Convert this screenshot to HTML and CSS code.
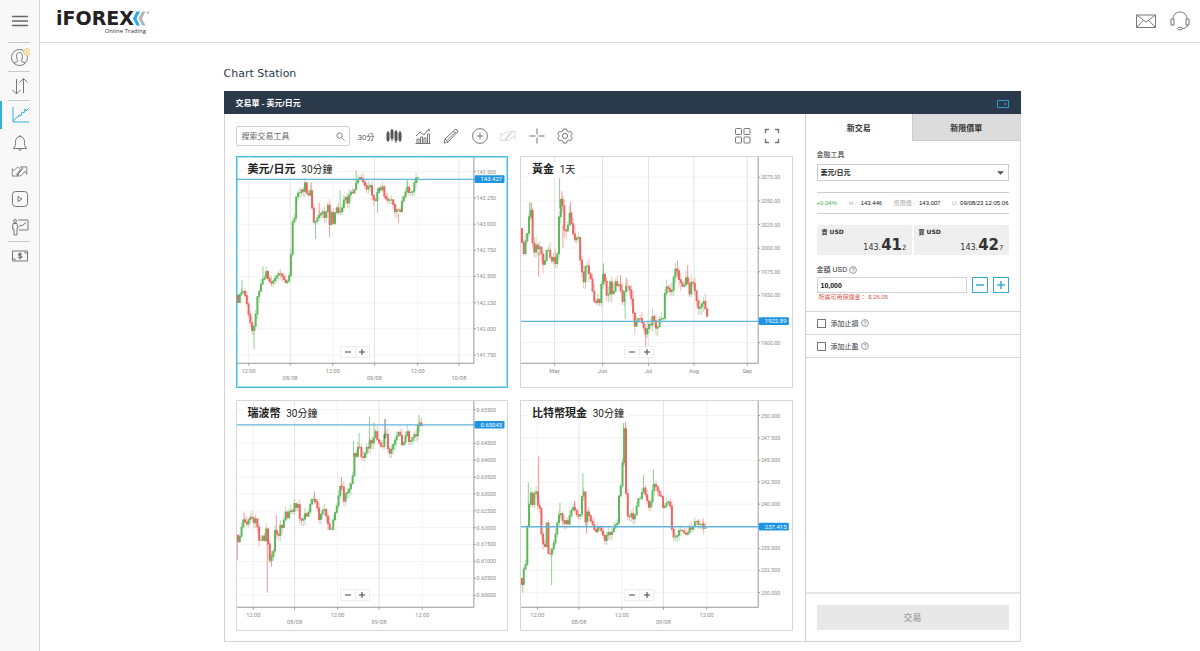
FILE: index.html
```html
<!DOCTYPE html>
<html lang="zh-Hant">
<head>
<meta charset="utf-8">
<title>iFOREX Chart Station</title>
<link rel="stylesheet" href="styles.css">
</head>
<body>
<svg class="sprite" aria-hidden="true">
  <symbol id="swap" viewBox="0 0 18 12"><path d="M1 3v8h7l-2-2 4-5-3-3-4 4zM17 9V1h-7l2 2-5 6 2 2 2-1 4-4zM6 11l7-9"/></symbol>
  <symbol id="help" viewBox="0 0 8 8"><circle cx="4" cy="4" r="3.4"/><path d="M2.9 3.2c0-1.6 2.3-1.5 2.2 0C5 3.9 4 3.9 4 4.9M4 5.6v.7"/></symbol>
</svg>
<nav class="sidebar" aria-label="主選單">
  <button class="menu" aria-label="選單"><svg viewBox="0 0 16 12"><path d="M0 1.5h16M0 6h16M0 10.5h16"/></svg></button>
  <ul class="nav">
    <li class="rule"></li>
    <li><a href="#" aria-label="帳戶"><svg viewBox="0 0 20 20"><circle cx="9.5" cy="10.5" r="8"/><path d="M4 16.2c1-1 3.5-1.2 3.8-2.2.2-1-1.3-2-1.3-4.5C6.5 7 7.5 5.5 9.5 5.5s3 1.5 3 4c0 2.5-1.5 3.5-1.3 4.5.3 1 2.8 1.2 3.8 2.2"/><circle class="coin" cx="17" cy="5" r="3.3"/><path class="coin-mark" d="M17 3.5v3"/></svg></a></li>
    <li class="rule"></li>
    <li><a href="#" aria-label="交易"><svg viewBox="0 0 20 20"><path d="M6.5 3v15M2.500 14l4 4 4-4M13.500 17V2.500M9.500 6.500l4-4 4 4"/></svg></a></li>
    <li class="rule"></li>
    <li class="active"><a href="#" aria-label="圖表"><svg viewBox="0 0 20 20"><path d="M3 2v15h16"/><path d="M3 16l3-3 2-1 1-2 2 1 1-4 2 1 1-4 1 2 3-3"/></svg></a></li>
    <li><a href="#" aria-label="提醒"><svg viewBox="0 0 20 20"><path d="M3.5 15.5c2-2 2-4 2-7 0-3 2-5 4.5-5s4.500 2 4.500 5c0 3 0 5 2 7zM8.5 15.5c0 2.500 3 2.500 3 0M10 3.500V2"/></svg></a></li>
    <li><a href="#" aria-label="訊號"><svg class="wide" viewBox="0 0 18 12"><use href="#swap"/></svg></a></li>
    <li><a href="#" aria-label="影片"><svg viewBox="0 0 20 20"><rect x="2.5" y="2.5" width="15" height="15" rx="3"/><path d="M8 7.5v5l4-2.5z"/></svg></a></li>
    <li><a href="#" aria-label="教學"><svg viewBox="0 0 20 20"><circle cx="5" cy="4" r="1.5"/><path d="M3 6.5h4l1 5H7V18H4v-6H2.5zM8 3h10v10H9M9 9.5l2-1.5 1 .8 4-3.3"/></svg></a></li>
    <li class="rule"></li>
    <li><a href="#" aria-label="資金"><svg viewBox="0 0 20 20"><path d="M2.5 5h15v10h-15zM4 12v1.500h1.500M14.500 6.500H16V8"/><path class="strong" d="M11.800 8.300c-1-1.200-3.700-.9-3.300.4.400 1.100 3 .7 3.200 2 .2 1.400-2.700 1.500-3.500.3M10 6.500v7"/></svg></a></li>
  </ul>
</nav>
<div class="page">
  <header class="topbar">
    <a class="logo" href="#" aria-label="iFOREX Online Trading">
      <span class="logo-row"><span class="logo-name">iFOREX</span><svg class="chevrons" viewBox="0 0 17 15"><path class="chev-blue" d="M3.500.500h3.500L3.500 7.500 7 14.500H3.500L0 7.500z"/><path class="chev-grey" d="M9 .500h3.500L9 7.500l3.500 7H9L5.500 7.500z"/><circle class="chev-dot" cx="15" cy="1.500" r="1"/></svg></span>
      <span class="logo-tag">Online Trading</span>
    </a>
    <div class="top-actions">
      <button aria-label="訊息"><svg viewBox="0 0 22 20"><path d="M1.500 4h19v12.500h-19zM1.500 4l9.500 7 9.500-7M1.500 16.500l7-7.300M20.500 16.500l-7-7.300"/></svg></button>
      <button aria-label="客服"><svg viewBox="0 0 22 20"><path d="M4 8c0-4 3-7 7-7s7 3 7 7M2 8h3v6H2zM17 8h3v6h-3zM18.500 14c0 2.500-3 3.500-5.500 3.500"/><ellipse cx="11" cy="17.500" rx="2.500" ry="1.300"/></svg></button>
    </div>
  </header>
  <main class="content">
    <h1>Chart Station</h1>
    <section class="station">
      <div class="station-bar"><h2>交易單 - 美元/日元</h2><button aria-label="收合面板"><svg viewBox="0 0 12 8"><path d="M.5.5h11v7H.5z"/><path class="fill" d="M7.500 2.500v3l2-1.500z"/></svg></button></div>
      <div class="station-body">
        <div class="workspace">
          <div class="toolbar">
            <label class="search"><input type="text" aria-label="搜索交易工具" placeholder="搜索交易工具"><svg viewBox="0 0 10 10"><circle cx="4" cy="4" r="3"/><path d="M6.200 6.200L9.500 9.500"/></svg></label>
            <button class="period">30分</button>
            <div class="tools">
              <button aria-label="圖表類型"><svg class="dark" viewBox="0 0 16 16"><path d="M2 3v11M6 1v12M10 2v13M14 3v11"/><path class="body" d="M2 5.500v6M6 3v6.500M10 4.500v7M14 5.500v6"/></svg></button>
              <button aria-label="指標"><svg viewBox="0 0 16 16"><path d="M.5 15.500h15M2 15v-4h2v4M5.500 15V9h2v6M9 15v-5h2v5M12.500 15V6h2v9M1 8l4-4 4 3 4-5 2 1M13 2l2-1"/></svg></button>
              <button aria-label="繪圖"><svg viewBox="0 0 16 16"><path d="M1 15l1-4L12 1.500c1-1 3.500 1.500 2.500 2.500L5 14zM2 11l3 3M10.500 3l2.500 2.500M4 12.500l8.500-8.500"/></svg></button>
              <button aria-label="新增"><svg viewBox="0 0 16 16"><circle cx="8" cy="8" r="7.400"/><path d="M8 4.500v7M4.500 8h7"/></svg></button>
              <button aria-label="訊號" disabled><svg viewBox="0 0 18 12"><use href="#swap"/></svg></button>
              <button aria-label="十字線"><svg viewBox="0 0 16 16"><path d="M8 .5v6M8 9.500v6M.5 8h6M9.500 8h6"/></svg></button>
              <button aria-label="設定"><svg viewBox="0 0 16 16"><circle cx="8" cy="8" r="2.600"/><path d="M6.400 1h3.200l.6 2.200 1.300.7 2.200-.6 1.600 2.800-1.600 1.600v.6l1.600 1.600-1.600 2.800-2.200-.6-1.300.7-.6 2.200H6.400l-.6-2.200-1.300-.7-2.200.6L.7 9.900l1.600-1.600v-.6L.7 6.100l1.600-2.800 2.200.6 1.300-.7z"/></svg></button>
            </div>
            <div class="views">
              <button aria-label="版面"><svg viewBox="0 0 16 16"><rect x=".5" y=".5" width="6" height="6" rx=".8"/><rect x="9" y=".5" width="6" height="6" rx=".8"/><rect x=".5" y="9" width="6" height="6" rx=".8"/><rect x="9" y="9" width="6" height="6" rx=".8"/></svg></button>
              <button aria-label="全螢幕"><svg class="thick" viewBox="0 0 16 16"><path d="M1.500 5V1.500H5M11 1.500h3.500V5M14.500 11v3.500H11M5 14.500H1.500V11"/></svg></button>
            </div>
          </div>
          <div class="charts">
            <article class="card selected" data-chart="usdjpy"><h3>美元/日元 <span>30分鐘</span></h3></article>
            <article class="card" data-chart="gold"><h3>黃金 <span>1天</span></h3></article>
            <article class="card" data-chart="xrp"><h3>瑞波幣 <span>30分鐘</span></h3></article>
            <article class="card" data-chart="bch"><h3>比特幣現金 <span>30分鐘</span></h3></article>
          </div>
        </div>
        <form class="ticket">
          <div class="tabs"><button type="button" class="on">新交易</button><button type="button">新限價單</button></div>
          <div class="fields">
            <label class="caption" for="instrument">金融工具</label>
            <div class="select"><select id="instrument"><option>美元/日元</option></select><svg viewBox="0 0 8 4"><path d="M0 0h8L4 4z"/></svg></div>
            <div class="stats">
              <span class="up">+0.04%</span>
              <span class="pair"><i>H :</i><b>143.44<small>6</small></b></span>
              <span class="pair"><i>低限價 :</i><b>143.00<small>7</small></b></span>
              <span class="pair"><i>U:</i><b>09/08/23 12:05:06</b></span>
            </div>
            <div class="quotes">
              <button type="button"><span class="side">賣 USD</span><span class="quote">143.<b>41</b><small>2</small></span></button>
              <button type="button"><span class="side">買 USD</span><span class="quote">143.<b>42</b><small>7</small></span></button>
            </div>
            <label class="caption" for="amount">金額 USD <svg class="help"><use href="#help"/></svg></label>
            <div class="amount">
              <input id="amount" type="text" value="10,000">
              <button type="button" aria-label="減少"><svg viewBox="0 0 10 10"><path d="M1 5h8"/></svg></button>
              <button type="button" aria-label="增加"><svg viewBox="0 0 10 10"><path d="M1 5h8M5 1v8"/></svg></button>
            </div>
            <p class="margin">所需可用保證金： $ 26.05</p>
          </div>
          <div class="option"><input type="checkbox" id="sl"><label for="sl">添加止損 <svg class="help"><use href="#help"/></svg></label></div>
          <div class="option"><input type="checkbox" id="tp"><label for="tp">添加止盈 <svg class="help"><use href="#help"/></svg></label></div>
          <div class="submit"><button type="submit" disabled>交易</button></div>
        </form>
      </div>
    </section>
  </main>
</div>
<script src="charts.js"></script>
</body>
</html>
```
FILE: styles.css
```css
* { box-sizing: border-box; }
body { margin: 0; min-height: 100vh; display: flex; background: #fff; color: #333; font-family: "Liberation Sans", "Noto Sans CJK TC", sans-serif; font-size: 8px; }
button { font: inherit; color: inherit; background: none; border: 0; padding: 0; margin: 0; }
h1, h2, h3, p, ul { margin: 0; padding: 0; }
svg { display: block; fill: none; stroke: #777; stroke-width: 1; }
.sprite { position: absolute; width: 0; height: 0; }

.sidebar { flex: none; width: 40px; background: #f8f8f8; border-right: 1px solid #d6d6d6; }
.menu { display: flex; width: 100%; height: 42px; align-items: center; justify-content: center; }
.menu svg { width: 16px; height: 12px; stroke: #666; stroke-width: 1.5; }
.nav { list-style: none; }
.nav li { height: 28px; }
.nav .rule { height: 1px; margin: 0 9px 0 8px; background: #c9c9c9; }
.nav a { display: flex; height: 100%; align-items: center; justify-content: center; }
.nav svg { width: 20px; height: 20px; }
.nav svg.wide { width: 17px; height: 11px; }
.nav .strong { stroke-width: 1.3; }
.nav .active { border-left: 2px solid #35b0da; padding-right: 2px; }
.nav .active svg { stroke: #35b0da; }
.coin { fill: #fbf3cf; stroke: #e6cf72; }
.coin-mark { stroke: #e0c050; }

.page { flex: 1; min-width: 0; }
.topbar { height: 43px; display: flex; justify-content: space-between; align-items: center; padding: 0 9px 0 16px; border-bottom: 1px solid #d6d6d6; }
.logo { display: flex; flex-direction: column; color: #222; text-decoration: none; padding-top: 3px; }
.logo-row { display: flex; align-items: center; height: 16px; }
.logo-name { font: bold 19px/16px "DejaVu Sans", sans-serif; }
.chevrons { width: 17px; height: 15px; stroke: none; margin-left: -1px; }
.chev-blue { fill: #2aaee0; }
.chev-grey { fill: #b5b5b5; }
.chev-dot { fill: #999; }
.logo-tag { align-self: flex-end; margin: 1px 4px 0 0; font: 6px/8px "Open Sans", sans-serif; color: #333; }
.top-actions { display: flex; gap: 12px; }
.top-actions svg { width: 22px; height: 20px; }

.content { width: 100%; max-width: 801px; margin: 0 auto; padding: 23px 0 8px 4px; }
h1 { font: 11px/16px "DejaVu Sans", sans-serif; color: #2b3a4a; margin-bottom: 9px; }
.station { border: 1px solid #d3d3d3; border-top: 0; }
.station-bar { display: flex; justify-content: space-between; align-items: center; height: 23px; margin: 0 -1px; padding: 2px 12px 0; background: #2b3a4a; color: #fff; }
.station-bar h2 { font-size: 8px; line-height: 12px; }
.station-bar svg { width: 12px; height: 8px; stroke: #2b9fcb; }
.station-bar .fill { fill: #2b9fcb; stroke: none; }
.station-body { display: flex; }
.workspace { flex: 1; min-width: 0; padding: 12px 12px 10px 11px; }

.toolbar { display: flex; align-items: center; height: 20px; margin-bottom: 10px; }
.toolbar svg { width: 16px; height: 16px; }
.toolbar .search { display: flex; align-items: center; width: 114px; height: 20px; padding: 0 4px 0 5px; border: 1px solid #d0d0d0; border-radius: 2px; }
.search input { flex: 1; min-width: 0; border: 0; padding: 0; font: inherit; outline: 0; background: none; }
.search input::placeholder { color: #666; opacity: 1; }
.toolbar .search svg { width: 9px; height: 9px; }
.period { margin: 0 12px 0 8px; color: #555; }
.tools { display: flex; justify-content: space-between; flex: 0 1 187px; }
.tools .dark { stroke: #555; }
.tools .body { stroke-width: 3; stroke-linecap: round; }
.tools button:disabled { opacity: .3; }
.views { display: flex; gap: 13px; margin-left: auto; padding-right: 13px; }
.views .thick { stroke-width: 1.5; }

.charts { display: grid; grid-template-columns: 1fr 1fr; gap: 12px; }
.card { position: relative; border: 1px solid #d6d6d6; }
.card.selected { border-color: #49bde0; box-shadow: inset 0 0 0 1px #a5dff0; }
.card h3 { position: absolute; left: 7px; top: 5px; padding: 0 4px; background: #fff; color: #222; font: bold 11px/16px Roboto, "Noto Sans CJK TC", sans-serif; }
.card h3 span { margin-left: 3px; font-size: 10px; font-weight: 400; }
.plot { width: 100%; height: auto; stroke: none; font-family: Roboto, sans-serif; }
.grid { stroke: #f3f3f3; stroke-width: 3; }
.grid.major { stroke: #e2e2e2; }
.axis { stroke: #999; stroke-width: 3; }
.price { font-size: 16px; fill: #8a8a8a; }
.time { font-size: 17px; fill: #8a8a8a; text-anchor: middle; }
.now { stroke: #62b4dc; stroke-width: 4; }
.chip { fill: #1e94e4; }
.chip-text { font-size: 18px; fill: #fff; text-anchor: end; }
.rise { stroke: #5cb85a; }
.drop { stroke: #ee6460; }
.flat { stroke: #222; }
.wick { stroke-width: 2; }
.candle { stroke-width: 6; }
.zoom { position: absolute; left: 103px; bottom: 29px; display: flex; background: #fff; border: 1px solid #eee; }
.zoom button { width: 14px; height: 10px; display: flex; align-items: center; justify-content: center; }
.zoom button + button { border-left: 1px solid #eee; }
.zoom svg { width: 6px; height: 6px; stroke: #444; }

.ticket { flex: none; width: 215px; display: flex; flex-direction: column; border-left: 1px solid #cfcfcf; }
.tabs { display: flex; height: 27px; }
.tabs button { flex: 1; background: #dcdcdc; border-left: 1px solid #ccc; border-bottom: 1px solid #ccc; font-weight: bold; }
.tabs .on { background: #fff; border: 0; }
.fields { padding: 9px 11px 9px; display: flex; flex-direction: column; }
.caption { display: flex; align-items: center; gap: 2px; font-size: 7px; line-height: 10px; margin-bottom: 4px; }
.help { width: 8px; height: 8px; stroke: #999; stroke-width: 1; }
.select { display: grid; align-items: center; }
.select select, .select svg { grid-area: 1 / 1; }
.select select { appearance: none; height: 17px; padding: 0 4px 0 3px; border: 1px solid #ccc; border-radius: 0; background: #fff; color: #222; font: bold 7px "Liberation Sans", "Noto Sans CJK TC", sans-serif; }
.select svg { justify-self: end; width: 7px; height: 4px; margin-right: 5px; fill: #555; stroke: none; pointer-events: none; }
.stats { display: flex; justify-content: space-between; align-items: center; height: 22px; margin: 11px 0; border: 1px solid #ccc; border-width: 1px 0; font-size: 6px; line-height: 8px; white-space: nowrap; }
.stats .up { color: #3fae49; }
.pair { display: flex; align-items: baseline; gap: 4px; }
.pair:last-child { gap: 2px; }
.pair i { font-style: normal; color: #aaa; }
.pair b { font-weight: 400; color: #111; }
.pair small { font-size: 5px; }
.quotes { display: grid; grid-template-columns: 1fr 1fr; gap: 2px; margin-bottom: 10px; }
.quotes button { display: flex; flex-direction: column; height: 30px; padding: 3px 5px 0; background: #efefef; border-radius: 2px; font-family: "DejaVu Sans", "Noto Sans CJK TC", sans-serif; text-align: left; }
.side { font-size: 6px; line-height: 8px; font-weight: bold; }
.quote { align-self: flex-end; font-size: 8px; line-height: 19px; }
.quote b { font-size: 15px; }
.quote small { font-size: 7px; }
.quotes + .caption { margin-bottom: 2px; }
.amount { display: flex; gap: 5px; }
.amount input { flex: 1; min-width: 0; height: 16px; padding: 0 3px; border: 1px solid #d3d3d3; font: bold 7px "Liberation Sans", sans-serif; color: #111; }
.amount button { width: 16px; height: 16px; border: 1px solid #38a6d6; display: flex; align-items: center; justify-content: center; }
.amount svg { width: 10px; height: 10px; stroke: #38a6d6; stroke-width: 1.5; }
.margin { padding-left: 2px; font-size: 6px; line-height: 9px; color: #e25550; }
.option { display: flex; align-items: center; gap: 5px; height: 23px; padding: 0 11px; border-top: 1px solid #d6d6d6; font-size: 7px; }
.option + .submit { border-top: 1px solid #d6d6d6; }
.option input { appearance: none; width: 9px; height: 9px; margin: 0; border: 1px solid #777; }
.option label { display: flex; align-items: center; gap: 2px; }
.submit { flex: 1; display: flex; flex-direction: column; justify-content: flex-end; }
.submit button { height: 25px; margin: 0 11px 11px; background: #e8e8e8; color: #aaa; font-size: 9px; font-weight: bold; }
.submit::before { content: ""; border-top: 2px solid #e6e6e6; margin-bottom: 11px; }
```
FILE: charts.js
```js
// Each chart: visible origin, price and time ticks, current price line, and the price path.
const charts = {
  usdjpy: {
    origin: [18, 15],
    prices: [['143.500', 59], ['143.250', 138], ['143.000', 217], ['142.750', 295], ['142.500', 374], ['142.250', 453], ['142.000', 531], ['141.750', 610]],
    times: [['12:00', 53], ['08/08', 178, 1], ['12:00', 306], ['09/08', 431, 1], ['12:00', 561], ['10/08', 685, 1]],
    now: ['143.427', 82], noise: 18,
    path: '18,430 22,460 27,424 38,418 45,440 52,485 60,522 66,548 72,495 78,470 80,415 86,420 92,385 100,380 106,358 112,385 122,395 135,375 145,362 155,375 163,394 172,385 178,355 181,285 185,210 192,195 197,118 205,128 210,108 216,125 222,90 230,138 240,112 245,190 250,217 258,200 265,190 275,178 283,205 290,145 297,223 303,172 308,223 315,160 325,187 335,165 342,128 350,155 357,118 368,125 375,95 385,75 392,80 400,95 408,112 418,98 426,142 435,147 443,105 450,115 455,100 460,132 470,146 482,143 490,165 495,192 500,160 507,190 513,150 520,132 530,105 535,122 545,122 550,95 558,73 563,78',
    wicks: [['rise', 69, 540, 592], ['rise', 96, 343, 385], ['rise', 33, 385, 420], ['drop', 241, 90, 130], ['rise', 254, 210, 262], ['drop', 296, 200, 255], ['drop', 265, 152, 190], ['rise', 328, 115, 180], ['rise', 376, 55, 90], ['rise', 440, 110, 183], ['drop', 503, 185, 212], ['rise', 530, 82, 110]]
  },
  gold: {
    origin: [17, 15],
    prices: [['2075.00', 76], ['2050.00', 147], ['2025.00', 218], ['2000.00', 289], ['1975.00', 360], ['1950.00', 431], ['1900.00', 573]],
    times: [['May', 118, 1, 1], ['Jun', 262, 1, 1], ['Jul', 400, 1, 1], ['Aug', 537, 1, 1], ['Sep', 697, 1, 1]],
    now: ['1922.89', 509], noise: 26,
    path: '17,230 20,272 25,308 30,270 37,240 43,175 49,175 52,280 58,305 64,270 70,305 75,272 81,335 87,342 92,300 98,288 104,315 110,328 116,315 124,350 129,240 134,142 141,142 145,230 151,242 157,225 163,183 170,225 177,265 183,262 189,246 193,315 199,345 204,410 209,345 217,342 222,370 228,385 234,435 240,460 247,440 253,455 258,400 266,355 273,430 279,432 285,390 293,445 299,385 306,402 314,398 322,450 330,405 338,405 346,420 352,470 360,530 367,500 375,500 383,520 392,550 400,515 406,525 413,490 419,512 425,540 433,503 444,500 450,415 457,400 463,422 471,415 479,350 486,355 493,390 500,395 505,415 510,385 516,370 522,437 529,390 536,395 543,440 550,470 557,465 565,445 573,480 580,508',
    wicks: [['rise', 43, 150, 200], ['drop', 49, 152, 200], ['rise', 133, 75, 170], ['drop', 140, 118, 160], ['drop', 166, 150, 200], ['drop', 143, 220, 288], ['drop', 70, 300, 375], ['rise', 265, 335, 370], ['rise', 330, 440, 502], ['drop', 316, 370, 420], ['drop', 392, 540, 590], ['drop', 487, 325, 370], ['drop', 518, 340, 390], ['drop', 333, 378, 410]]
  },
  xrp: {
    origin: [18, 12],
    prices: [['0.65500', 38], ['0.64500', 139], ['0.64000', 190], ['0.63500', 241], ['0.63000', 291], ['0.62500', 342], ['0.62000', 393], ['0.61500', 443], ['0.61000', 494], ['0.60500', 545], ['0.60000', 596]],
    times: [['12:00', 67], ['08/08', 191, 1], ['12:00', 320], ['09/08', 445, 1], ['12:00', 575]],
    now: ['0.65043', 84], noise: 20,
    path: '18,415 22,442 28,410 36,368 44,378 50,385 54,362 62,360 70,382 75,362 81,402 87,450 93,410 100,435 106,395 111,440 116,492 122,480 128,460 132,400 142,422 148,385 155,395 163,342 170,365 177,335 184,350 191,318 197,335 203,318 206,365 215,374 222,350 230,362 237,325 245,305 253,310 260,335 265,370 272,345 280,335 288,365 295,398 302,398 307,370 313,345 320,320 327,268 334,270 338,318 344,290 352,285 360,262 366,235 370,168 377,180 383,140 388,155 393,185 400,180 407,150 413,155 418,130 425,140 434,102 441,135 448,140 454,160 461,112 467,112 472,160 477,170 483,155 490,135 497,120 505,102 510,120 515,150 521,130 529,98 534,135 542,130 550,112 557,118 563,75 570,80 575,95',
    wicks: [['drop', 109, 440, 588], ['drop', 19, 430, 490], ['drop', 122, 470, 510], ['drop', 251, 285, 320], ['drop', 332, 240, 280], ['rise', 368, 132, 180], ['rise', 385, 108, 150], ['rise', 416, 60, 140], ['rise', 430, 76, 120], ['rise', 565, 53, 90], ['drop', 136, 355, 400], ['drop', 39, 347, 375]],
    marks: [['flat', 463, 66, 125]]
  },
  bch: {
    origin: [17, 12],
    prices: [['250.000', 56], ['247.500', 123], ['245.000', 190], ['242.500', 255], ['240.000', 322], ['235.000', 455], ['232.500', 521], ['230.000', 588]],
    times: [['12:00', 66], ['08/08', 191, 1], ['12:00', 320], ['09/08', 445, 1], ['12:00', 575]],
    now: ['237.415', 390], noise: 18,
    path: '17,545 21,570 24,520 32,500 36,385 41,325 46,285 52,325 57,290 63,285 68,328 74,335 78,410 85,450 90,450 95,365 99,470 106,472 112,450 118,430 124,390 130,355 137,350 145,385 152,370 159,385 165,345 175,330 185,355 194,362 200,300 205,275 210,380 217,340 225,370 233,385 241,410 247,390 255,395 262,410 269,432 278,405 286,415 293,400 300,385 307,378 311,300 318,260 322,200 327,78 331,250 335,345 341,370 347,345 355,370 362,345 368,305 377,305 384,267 390,290 397,315 404,340 410,290 417,262 424,270 432,295 440,300 445,340 452,320 460,315 466,330 470,395 476,422 485,420 492,400 500,400 508,410 516,415 523,392 531,400 538,375 545,373 551,385 560,380 567,398 575,390',
    wicks: [['drop', 70, 178, 320], ['rise', 39, 257, 330], ['rise', 109, 470, 565], ['rise', 203, 228, 290], ['rise', 22, 560, 588], ['rise', 134, 318, 360], ['drop', 331, 68, 250], ['rise', 325, 78, 205], ['rise', 385, 235, 280], ['rise', 415, 217, 270], ['drop', 214, 345, 410], ['drop', 178, 312, 340], ['drop', 564, 365, 390]]
  }
};

const STEP = 5.3, RIGHT = 730;

function candles(chart) {
  const points = chart.path.split(' ').map(p => p.split(',').map(Number));
  const at = x => {
    const i = Math.max(1, points.findIndex(p => p[0] >= x));
    const [a, b] = [points[i - 1], points[i]];
    return a[1] + (b[1] - a[1]) * (x - a[0]) / (b[0] - a[0]);
  };
  let open = points[0][1], out = '', k = 0;
  for (let x = points[0][0] + 3; x <= points[points.length - 1][0]; x += STEP, k++) {
    const close = at(x);
    const kind = close <= open ? 'rise' : 'drop';
    const top = Math.min(open, close) - 1, low = Math.max(open, close) + 1;
    const up = (k * 37 % 11) / 11 * chart.noise, down = (k * 53 % 13) / 13 * chart.noise;
    out += `<path class="wick ${kind}" opacity=".65" d="M${x} ${top - up}V${low + down}"/><path class="candle ${kind}" d="M${x} ${top}V${low}"/>`;
    open = close;
  }
  return out;
}

const wick = ([kind, x, y1, y2]) => `<path class="wick ${kind}" d="M${x} ${y1}V${y2}"/>`;

for (const card of document.querySelectorAll('.card')) {
  const c = charts[card.dataset.chart];
  const [ox, oy] = c.origin;
  const base = oy + 620, row = oy + 648;
  let s = '';
  for (const [label, y] of c.prices) s += `<path class="grid" d="M${ox} ${y}H${RIGHT}"/><path class="axis" d="M${RIGHT} ${y}h6"/><text class="price" x="738" y="${y + 6}">${label}</text>`;
  for (const [label, x, major, single] of c.times) s += `<path class="grid${major ? ' major' : ''}" d="M${x} ${oy}V${base}"/><path class="axis" d="M${x} ${base}v7"/><text class="time" x="${x}" y="${major && !single ? row + 21 : row}">${label}</text>`;
  s += `<path class="axis" d="M${ox} ${base}H${RIGHT}V${oy}"/>`;
  s += c.wicks.map(wick).join('') + candles(c) + (c.marks || []).map(wick).join('');
  const [now, y] = c.now;
  s += `<path class="now" d="M${ox} ${y}H${RIGHT + 4}"/><rect class="chip" x="732" y="${y - 12}" width="90" height="23" rx="3"/><text class="chip-text" x="815" y="${y + 6}">${now}</text>`;
  card.insertAdjacentHTML('afterbegin', `<svg class="plot" viewBox="${ox} ${oy} 813 690" role="img">${s}</svg>`);
  card.insertAdjacentHTML('beforeend', '<div class="zoom"><button aria-label="縮小"><svg viewBox="0 0 6 6"><path d="M0 3h6"/></svg></button><button aria-label="放大"><svg viewBox="0 0 6 6"><path d="M0 3h6M3 0v6"/></svg></button></div>');
}
```
